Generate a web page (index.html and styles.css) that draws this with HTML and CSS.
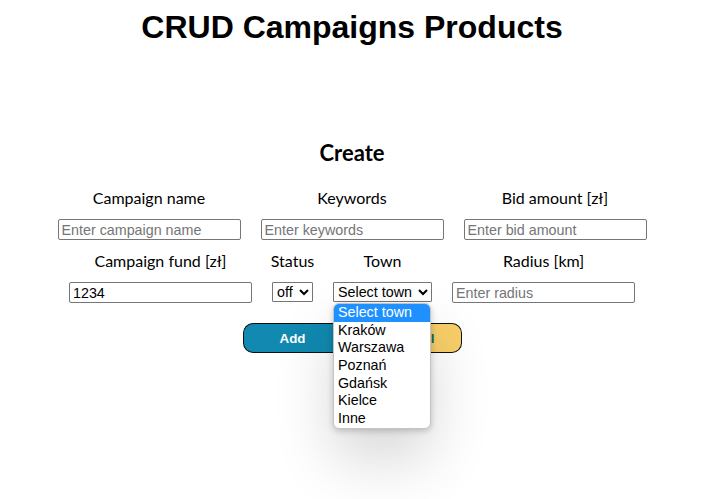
FILE: index.html
```html
<!DOCTYPE html>
<html lang="pl">
<head>
<meta charset="utf-8">
<title>CRUD Campaigns Products</title>
<link rel="stylesheet" href="styles.css">
</head>
<body>
  <h1 class="title">CRUD Campaigns Products</h1>
  <section class="create">
    <h2 class="create-title">Create</h2>
    <div class="row">
      <div class="field w-wide">
        <label class="label">Campaign name</label>
        <input class="input" type="text" placeholder="Enter campaign name">
      </div>
      <div class="field w-wide">
        <label class="label">Keywords</label>
        <input class="input" type="text" placeholder="Enter keywords">
      </div>
      <div class="field w-wide">
        <label class="label">Bid amount [zł]</label>
        <input class="input" type="text" placeholder="Enter bid amount">
      </div>
    </div>
    <div class="row row-second">
      <div class="field w-wide">
        <label class="label">Campaign fund [zł]</label>
        <input class="input" type="text" value="1234">
      </div>
      <div class="field w-status">
        <label class="label">Status</label>
        <select class="select sel-status"><option>off</option><option>on</option></select>
      </div>
      <div class="field w-town town-field">
        <label class="label">Town</label>
        <select class="select sel-town"><option>Select town</option></select>
        <ul class="dropdown">
          <li class="opt opt-active">Select town</li>
          <li class="opt">Kraków</li>
          <li class="opt">Warszawa</li>
          <li class="opt">Poznań</li>
          <li class="opt">Gdańsk</li>
          <li class="opt">Kielce</li>
          <li class="opt">Inne</li>
        </ul>
      </div>
      <div class="field w-wide">
        <label class="label">Radius [km]</label>
        <input class="input" type="text" placeholder="Enter radius">
      </div>
    </div>
    <div class="buttons">
      <button class="btn btn-add">Add</button>
      <button class="btn btn-cancel">Cancel</button>
    </div>
  </section>
</body>
</html>
```
FILE: styles.css
```css
html, body {
  margin: 0;
  padding: 0;
  background: #ffffff;
}
body {
  min-height: 499px;
  font-family: Lato, "Noto Sans", sans-serif;
  color: #000;
}
.title {
  margin: 9px 0 0;
  font-family: "Liberation Sans", Arial, sans-serif;
  font-weight: bold;
  font-size: 32px;
  line-height: 37px;
  text-align: center;
}
.create {
  display: flex;
  flex-direction: column;
  align-items: center;
}
.create-title {
  margin: 94px 0 22px;
  font-size: 22px;
  line-height: 26px;
  font-weight: bold;
}
.row {
  display: flex;
  justify-content: center;
  gap: 20px;
}
.row-second {
  margin-top: 11px;
}
.field {
  display: flex;
  flex-direction: column;
  align-items: center;
}
.w-wide { width: 183px; }
.w-status { width: 41px; }
.w-town { width: 99px; }
.town-field { position: relative; }
.label {
  display: block;
  font-size: 16px;
  line-height: 19px;
  margin-bottom: 12px;
  white-space: nowrap;
}
.input {
  box-sizing: border-box;
  width: 183px;
  height: 21px;
  margin: 0;
  padding: 1px 3px;
  border: 1px solid #767676;
  border-radius: 2px;
  font-family: "Liberation Sans", Arial, sans-serif;
  font-size: 14.3px;
  color: #000;
}
.input::placeholder { color: #757575; }
.select {
  box-sizing: border-box;
  height: 20px;
  margin: 0;
  border: 1px solid #767676;
  border-radius: 1px;
  font-family: "Liberation Sans", Arial, sans-serif;
  font-size: 14.3px;
  color: #000;
  background-color: #fff;
}
.sel-status { width: 41px; }
.sel-town { width: 99px; }
.dropdown {
  position: absolute;
  top: 52px;
  left: 0;
  box-sizing: border-box;
  width: 98px;
  margin: 0;
  padding: 0;
  list-style: none;
  background: #fff;
  border: 1px solid #c4c4c4;
  border-radius: 6px;
  overflow: hidden;
  box-shadow: 0 2px 6px rgba(0, 0, 0, 0.2), 0 30px 60px rgba(0, 0, 0, 0.16);
  font-family: "Liberation Sans", Arial, sans-serif;
  font-size: 14.3px;
  z-index: 5;
}
.opt {
  height: 17.7px;
  line-height: 17.7px;
  padding: 0 4px;
  white-space: nowrap;
  color: #000;
}
.opt-active {
  background: #1e90ff;
  color: #fff;
}
.buttons {
  display: flex;
  margin-top: 20px;
}
.btn {
  box-sizing: border-box;
  height: 30px;
  margin: 0;
  border: 1px solid #111;
  font-family: "Liberation Sans", Arial, sans-serif;
  font-size: 13.33px;
  font-weight: bold;
}
.btn-add {
  width: 99px;
  background: #1189b0;
  color: #fff;
  border-radius: 10px 0 0 10px;
  border-right: none;
}
.btn-cancel {
  width: 120px;
  background: #f9cf6a;
  color: #0c6b63;
  border-radius: 0 10px 10px 0;
  border-left: none;
  text-align: right;
  padding: 0 26px 0 0;
}
```
